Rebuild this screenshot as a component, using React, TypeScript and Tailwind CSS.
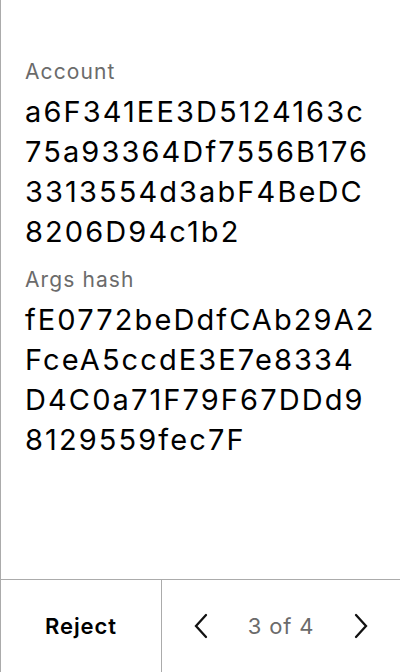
import React from 'react';

const font = { fontFamily: 'Inter, "Noto Sans", sans-serif' };

function Field({ label, lines }: { label: string; lines: string[] }) {
  return (
    <div className="flex flex-col">
      <div className="text-[21px] leading-[28px] tracking-[1.1px] text-[#6b6b6b]">{label}</div>
      <div className="mt-[6px] text-[29px] leading-[40px] tracking-[2.1px] text-black">
        {lines.map((l) => (
          <div key={l}>{l}</div>
        ))}
      </div>
    </div>
  );
}

function Chevron({ dir }: { dir: 'left' | 'right' }) {
  return (
    <svg width="16" height="26" viewBox="0 0 16 26" fill="none" stroke="#111" strokeWidth="2.3" strokeLinecap="round" strokeLinejoin="miter">
      {dir === 'left' ? <path d="M13 2 L3 13 L13 24" /> : <path d="M3 2 L13 13 L3 24" />}
    </svg>
  );
}

export default function App() {
  return (
    <div className="w-[400px] h-[672px] flex flex-col bg-white border-l border-[#ababab]" style={font}>
      <div className="flex-1 flex flex-col gap-[14px] pl-[24px] pt-[58px]">
        <Field
          label="Account"
          lines={['a6F341EE3D5124163c', '75a93364Df7556B176', '3313554d3abF4BeDC', '8206D94c1b2']}
        />
        <Field
          label="Args hash"
          lines={['fE0772beDdfCAb29A2', 'FceA5ccdE3E7e8334', 'D4C0a71F79F67DDd9', '8129559fec7F']}
        />
      </div>
      <div className="h-[93px] flex border-t border-[#ababab]">
        <button className="w-[160px] flex items-center justify-center text-[22px] font-semibold tracking-[0.9px] text-black">Reject</button>
        <div className="flex-1 flex items-center justify-between px-[31px] border-l border-[#ababab]">
          <Chevron dir="left" />
          <span className="text-[22px] tracking-[0.8px] text-[#6b6b6b]">3 of 4</span>
          <Chevron dir="right" />
        </div>
      </div>
    </div>
  );
}
